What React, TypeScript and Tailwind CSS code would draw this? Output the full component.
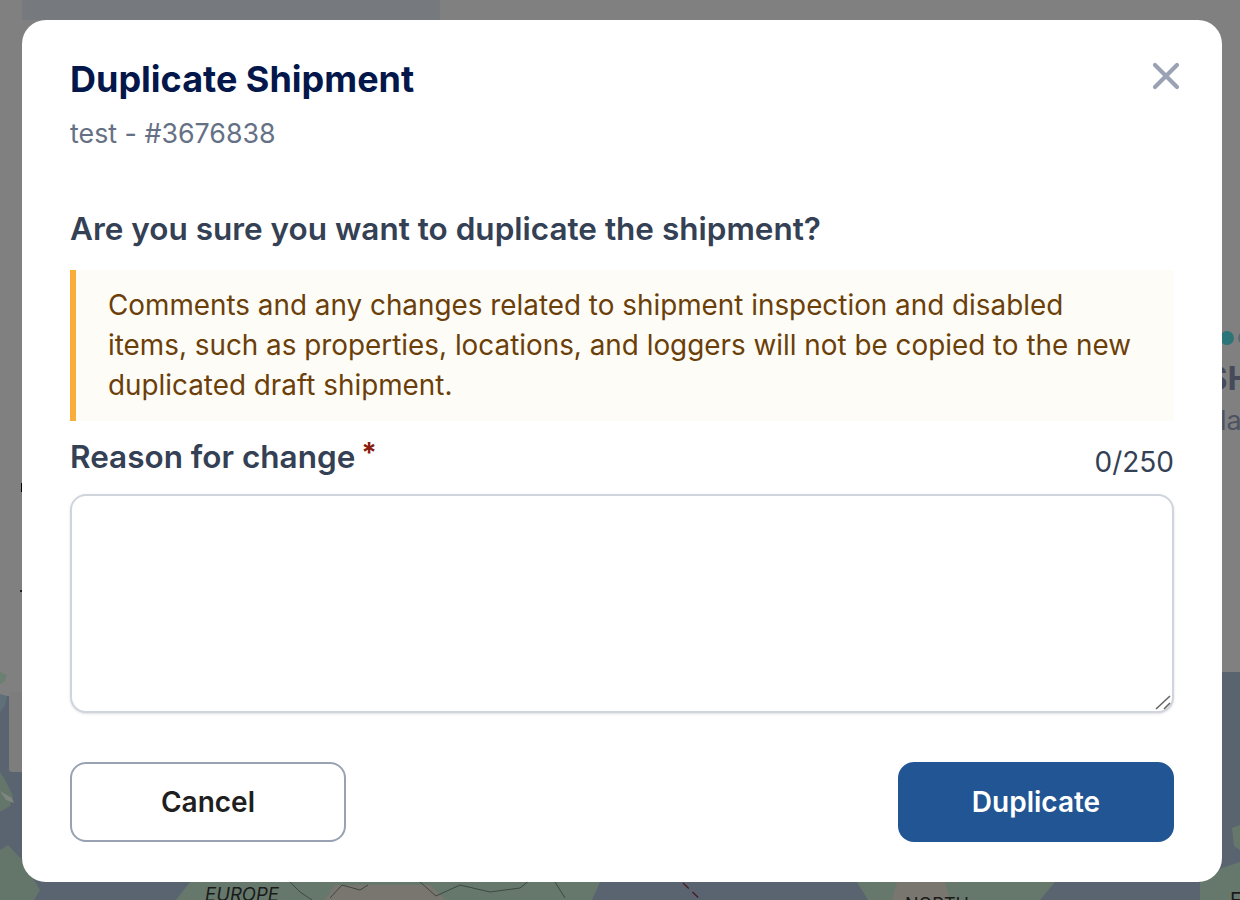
const font = { fontFamily: "Inter, 'Noto Sans', sans-serif" };

const MapBackdrop = () => (
  <div className="flex h-[900px] w-[1240px] flex-col overflow-hidden bg-[#808080]">
    <div className="flex h-[672px] shrink-0">
      <div className="relative w-[22px] shrink-0">
        <span className="absolute top-[483px] right-0 h-[9px] w-px bg-black" />
        <span className="absolute top-[590px] right-0 h-[2px] w-[2px] bg-[#222]" />
      </div>
      <div className="h-[20px] w-[418px] bg-[#767a7e]" />
      <div className="flex flex-1 flex-col items-end pt-[331px]">
        <div className="flex w-[40px] items-center gap-[4px] overflow-hidden pl-[20px]">
          <span className="h-[14px] w-[14px] shrink-0 rounded-full bg-[#2b7478]" />
          <span className="h-[14px] w-[14px] shrink-0 rounded-full bg-[#5a6a70]" />
        </div>
        <div className="mt-[15px] w-[40px] overflow-hidden pl-[6px] text-[33px] leading-9 font-bold whitespace-nowrap text-[#454b59]">
          SH
        </div>
        <div className="mt-[9px] w-[40px] overflow-hidden pl-[20px] text-[27px] leading-8 whitespace-nowrap text-[#4d5361]">
          la
        </div>
      </div>
    </div>
    <div className="relative flex-1 bg-[#596470]">
      <svg viewBox="0 672 1240 228" className="block h-[228px] w-[1240px]" fill="none">
        <rect x="0" y="672" width="22" height="24" fill="#808080" />
        <path d="M0 672 L7 675 L4 682 L0 684Z" fill="#6b7f72" />
        <path d="M0 694 L7 696 L5 706 L0 712Z" fill="#5f7078" />
        <rect x="9" y="692" width="20" height="80" rx="3" fill="#7d7d7d" />
        <path d="M0 772 L5 780 L13 796 L10 806 L0 812Z" fill="#64766a" />
        <path d="M0 791 L12 798 L14 803 L6 800Z" fill="#7f857f" />
        <path d="M0 850 L8 845 L22 860 L40 890 L34 900 L0 900Z" fill="#64766a" />
        <path d="M190 882 H600 L592 900 H176Z" fill="#66786b" />
        <path d="M335 885 H430 L445 900 H325Z" fill="#79766f" />
        <path d="M290 882 L300 892 L312 900 M330 898 L342 885 L360 890 L368 885 M420 882 L436 896 L460 885 L490 892 L520 888 L530 880 M555 882 L565 898" stroke="#3e4842" />
        <path d="M683 883 L703 902" stroke="#4a1620" strokeWidth="1.2" strokeDasharray="8 5" />
        <path d="M857 882 H1055 L1040 900 H868Z" fill="#66786b" />
        <path d="M897 882 H945 L950 900 H892Z" fill="#79766f" />
        <path d="M1232 828 L1240 825 V850 L1234 846Z" fill="#66786b" />
        <path d="M1200 882 L1222 868 L1240 862 V900 H1200Z" fill="#66786b" />
      </svg>
      <span className="absolute top-[212px] left-[205px] text-[18.5px] leading-5 text-[#1a1a1a] italic">EUROPE</span>
      <span className="absolute top-[223px] left-[905px] text-[18px] leading-5 text-[#1a1a1a]">NORTH</span>
      <span className="absolute top-[216px] left-[1230px] text-[20px] leading-6 text-[#1a1a1a]">F</span>
    </div>
  </div>
);

export default function App() {
  return (
    <div className="relative h-[900px] w-[1240px] overflow-hidden" style={font}>
      <MapBackdrop />
      <div className="absolute top-[20px] left-[22px] flex h-[862px] w-[1200px] flex-col rounded-[24px] bg-white px-[48px] pt-[38px]">
        <div className="flex items-start justify-between">
          <div>
            <h2 className="text-[36px] leading-[42px] font-bold text-[#03174a]">Duplicate Shipment</h2>
            <p className="mt-[17px] text-[26.8px] leading-[32px] text-[#667085]">test - #3676838</p>
          </div>
          <button className="mt-[1px] mr-[-10px] text-[#9aa3b5]">
            <svg width="36" height="36" viewBox="0 0 36 36" fill="none" stroke="currentColor" strokeWidth="4.2" strokeLinecap="round">
              <path d="M7 6 L29 28 M29 6 L7 28" />
            </svg>
          </button>
        </div>

        <p className="mt-[60px] text-[31.5px] leading-[40px] font-semibold text-[#344054]">
          Are you sure you want to duplicate the shipment?
        </p>

        <div className="mt-[21px] h-[151px] border-l-[6px] border-[#f9ae3b] bg-[#fefcf6] py-[15px] pr-[32px] pl-[32px] text-[27.85px] leading-[40px] text-[#6b3f0a]">
          Comments and any changes related to shipment inspection and disabled items, such as properties, locations, and loggers will not be copied to the new duplicated draft shipment.
        </div>

        <div className="mt-[15px] flex items-end justify-between">
          <label className="flex items-start text-[31.5px] leading-[42px] font-semibold text-[#344054]">
            Reason for change
            <span className="mt-[2px] ml-[6px] text-[28px] leading-[30px] font-bold text-[#8a1c0c]">*</span>
          </label>
          <span className="mb-[-2px] text-[28px] leading-[36px] text-[#344054]">0/250</span>
        </div>

        <div className="relative mt-[16px]">
          <textarea className="block h-[219px] w-full resize-none rounded-[16px] border-2 border-[#d0d5dd] bg-white shadow-sm outline-none" />
          <svg className="absolute right-[1px] bottom-[1px]" width="18" height="18" viewBox="0 0 18 18" stroke="#666" strokeWidth="1.6">
            <path d="M1 15 L15 2 M9 15 L15 9" />
          </svg>
        </div>

        <div className="mt-[49px] flex justify-between">
          <button className="h-[80px] w-[276px] rounded-[16px] border-2 border-[#98a2b3] bg-white text-[28px] font-semibold text-[#1f1f1f]">
            Cancel
          </button>
          <button className="h-[80px] w-[276px] rounded-[16px] bg-[#225593] text-[28px] font-semibold text-white">
            Duplicate
          </button>
        </div>
      </div>
    </div>
  );
}
